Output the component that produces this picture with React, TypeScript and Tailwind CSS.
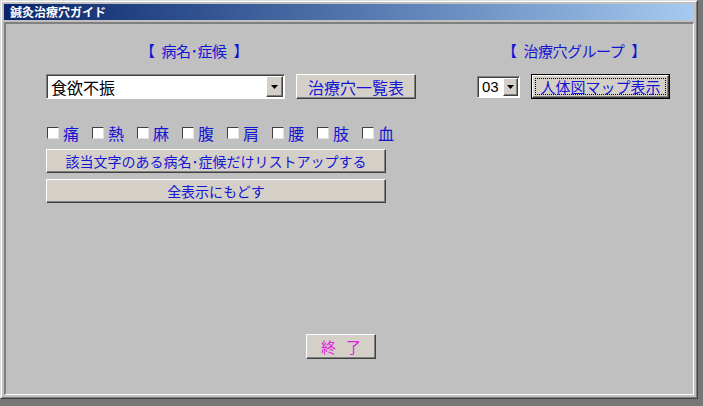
import React from "react";

const raised =
  "bg-[#d4d0c8] border-t border-l border-t-white border-l-white border-r border-b border-r-[#404040] border-b-[#404040] shadow-[inset_-1px_-1px_0_#808080]";
const sunken =
  "border-t border-l border-t-[#808080] border-l-[#808080] border-r border-b border-r-white border-b-white shadow-[inset_1px_1px_0_#404040]";

function DropArrow() {
  return (
    <svg width="7" height="4" viewBox="0 0 7 4">
      <path d="M0 0h7L3.5 4z" fill="#000" />
    </svg>
  );
}

function Combo({ value, w, h, text, btnW }: { value: string; w: string; h: string; text: string; btnW: string }) {
  return (
    <div className={`${w} ${h} ${sunken} bg-white flex items-stretch p-[1px]`}>
      <div className={`flex-1 flex items-center pl-[3px] text-black ${text} whitespace-nowrap overflow-hidden`}>{value}</div>
      <div className={`${btnW} ${raised} flex items-center justify-center`}>
        <DropArrow />
      </div>
    </div>
  );
}

export default function App() {
  const items = ["痛", "熱", "麻", "腹", "肩", "腰", "肢", "血"];
  const blue = "text-[#1414d4]";
  return (
    <div className="w-[703px] h-[406px] bg-[#777777] overflow-hidden font-['Noto_Sans_CJK_JP','Noto_Sans',sans-serif]">
      <div className="w-[698px] h-[399px] bg-[#c0c0c0] border-t border-l border-t-[#dfdfdf] border-l-[#dfdfdf] border-r border-b border-r-[#404040] border-b-[#404040]">
        <div className="w-full h-full border-t border-l border-t-white border-l-white border-r border-b border-r-[#808080] border-b-[#808080] p-[2px] flex flex-col">
          <div className="h-[16px] bg-gradient-to-r from-[#0a246a] to-[#a6caf0] flex items-center pl-[6px]">
            <span className="text-white font-bold text-[12px] leading-[16px]">鍼灸治療穴ガイド</span>
          </div>
          <div className="mt-[2px] flex-1 border-t-2 border-l-2 border-t-[#808080] border-l-[#808080] border-r border-b border-r-white border-b-white flex flex-col">
            <div className="flex-1 flex flex-col">
              {/* labels */}
              <div className={`mt-[17px] h-[20px] flex text-[15px] leading-[20px] tracking-[-0.5px] ${blue}`}>
                <span className="ml-[134px] w-[112px] whitespace-nowrap">【{"\u2002"}病名･症候{"\u2002"}】</span>
                <span className="ml-[250px] whitespace-nowrap">【{"\u2002"}治療穴グループ{"\u2002"}】</span>
              </div>
              {/* combo row */}
              <div className="mt-[13px] h-[25px] flex items-start">
                <div className="ml-[40px]">
                  <Combo value="食欲不振" w="w-[239px]" h="h-[25px]" text="text-[16px] leading-[20px]" btnW="w-[17px]" />
                </div>
                <button className={`ml-[11px] w-[120px] h-[25px] ${raised} ${blue} text-[16px] leading-[20px] flex items-center justify-center`}>
                  治療穴一覧表
                </button>
                <div className="ml-[61px] mt-[2px]">
                  <Combo value="03" w="w-[43px]" h="h-[22px]" text="text-[15px] leading-[18px] font-['Liberation_Sans_Narrow','Liberation_Sans',sans-serif]" btnW="w-[15px]" />
                </div>
                <div className="ml-[11px] w-[139px] h-[25px] border border-black">
                  <div className={`w-full h-full ${raised} p-[2px]`}>
                    <div className={`w-full h-full border border-dotted border-black flex items-center justify-center ${blue} text-[15px] leading-[18px]`}>
                      人体図マップ表示
                    </div>
                  </div>
                </div>
              </div>
              {/* checkboxes */}
              <div className="mt-[24px] h-[20px] flex ml-[41px]">
                {items.map((c) => (
                  <div key={c} className="w-[45px] flex items-center">
                    <span className="w-[12px] h-[12px] bg-white border-t border-l border-t-[#404040] border-l-[#404040] border-r border-b border-r-[#e0e0e0] border-b-[#e0e0e0]" />
                    <span className={`ml-[4px] text-[16px] leading-[20px] ${blue}`}>{c}</span>
                  </div>
                ))}
              </div>
              {/* buttons */}
              <button className={`mt-[6px] ml-[40px] w-[340px] h-[24px] ${raised} ${blue} text-[14px] leading-[20px] flex items-center justify-center whitespace-nowrap`}>
                該当文字のある病名･症候だけリストアップする
              </button>
              <button className={`mt-[6px] ml-[40px] w-[340px] h-[24px] ${raised} ${blue} text-[14px] leading-[20px] flex items-center justify-center`}>
                全表示にもどす
              </button>
              <button className={`mt-[131px] ml-[300px] w-[70px] h-[25px] ${raised} text-[#e020e0] text-[15px] leading-[20px] flex items-center justify-center gap-[10px]`}>
                <span>終</span>
                <span>了</span>
              </button>
            </div>
          </div>
        </div>
      </div>
    </div>
  );
}
